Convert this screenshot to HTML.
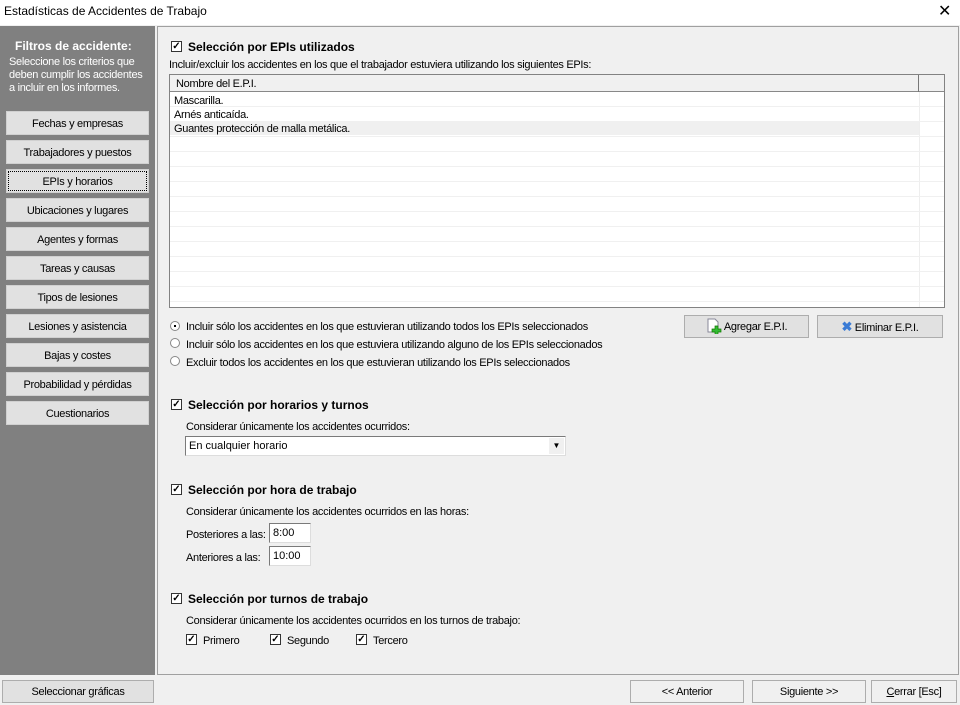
<!DOCTYPE html>
<html><head><meta charset="utf-8"><style>
*{box-sizing:border-box;margin:0;padding:0}
body{width:960px;height:705px;background:#f0f0f0;font-family:"Liberation Sans",sans-serif;font-size:11px;color:#000;position:relative;overflow:hidden}
.a{position:absolute;white-space:nowrap}
.t{letter-spacing:-0.3px}
.sb{position:absolute;left:6px;width:143px;height:24px;background:#e1e1e1;border:1px solid #d0d0d0;text-align:center;line-height:24px;font-size:11px;letter-spacing:-0.3px}
.cb{position:absolute;width:11px;height:11px;border:1px solid #333;background:#fff;font-size:10px;line-height:9px;text-align:center;font-weight:bold}
.h{font-weight:bold;font-size:12px}
.rd{position:absolute;width:10px;height:10px;border:1px solid #888;border-radius:50%;background:#fff}
.btn{position:absolute;height:23px;background:#e1e1e1;border:1px solid #adadad;text-align:center;line-height:22px;letter-spacing:-0.3px}
.inp{position:absolute;height:20px;background:#fff;border:1px solid #7a7a7a;border-right-color:#ddd;border-bottom-color:#ddd;padding-left:3px;line-height:19px}
</style></head><body>
<div class="a" style="left:0;top:0;width:960px;height:25px;background:#fff"></div>
<div class="a" style="left:4px;top:4px;font-size:12px">Estadísticas de Accidentes de Trabajo</div>
<div class="a" style="left:938px;top:1px;font-size:16px">✕</div>

<div class="a" style="left:0;top:26px;width:155px;height:649px;background:#808080"></div>
<div class="a" style="left:15px;top:39px;color:#fff;font-weight:bold;font-size:12px">Filtros de accidente:</div>
<div class="a t" style="left:9px;top:56px;color:#fff;line-height:13px">Seleccione los criterios que<br>deben cumplir los accidentes<br>a incluir en los informes.</div>
<div class="sb" style="top:111px">Fechas y empresas</div>
<div class="sb" style="top:140px">Trabajadores y puestos</div>
<div class="sb" style="top:169px;outline:1px dotted #000;outline-offset:-3px">EPIs y horarios</div>
<div class="sb" style="top:198px">Ubicaciones y lugares</div>
<div class="sb" style="top:227px">Agentes y formas</div>
<div class="sb" style="top:256px">Tareas y causas</div>
<div class="sb" style="top:285px">Tipos de lesiones</div>
<div class="sb" style="top:314px">Lesiones y asistencia</div>
<div class="sb" style="top:343px">Bajas y costes</div>
<div class="sb" style="top:372px">Probabilidad y pérdidas</div>
<div class="sb" style="top:401px">Cuestionarios</div>

<div class="a" style="left:157px;top:26px;width:802px;height:649px;border:1px solid #a0a0a0;background:#f0f0f0"></div>

<div class="cb" style="left:171px;top:41px">✓</div>
<div class="a h" style="left:188px;top:40px">Selección por EPIs utilizados</div>
<div class="a t" style="left:169px;top:59px">Incluir/excluir los accidentes en los que el trabajador estuviera utilizando los siguientes EPIs:</div>
<div class="a" style="left:169px;top:74px;width:776px;height:234px;background:#fff;border:1px solid #828282"></div>
<div class="a" style="left:170px;top:75px;width:774px;height:17px;background:#f0f0f0;border-bottom:1px solid #888"></div>
<div class="a" style="left:918px;top:75px;width:1px;height:17px;background:#777"></div>
<div class="a t" style="left:176px;top:78px">Nombre del E.P.I.</div>
<div class="a" style="left:170px;top:121px;width:749px;height:14px;background:#f0f0f0"></div>
<div class="a" style="left:919px;top:92px;width:1px;height:215px;background:#eee"></div>
<div class="a" style="left:170px;top:92px;width:774px;height:215px;background:repeating-linear-gradient(to bottom,transparent 0,transparent 14px,#f0f0f0 14px,#f0f0f0 15px)"></div>
<div class="a t" style="left:174px;top:95px">Mascarilla.</div>
<div class="a t" style="left:174px;top:109px">Arnés anticaída.</div>
<div class="a t" style="left:174px;top:123px">Guantes protección de malla metálica.</div>

<div class="rd" style="left:170px;top:321px"><div style="position:absolute;left:3px;top:3px;width:2px;height:2px;background:#000"></div></div>
<div class="a t" style="left:186px;top:321px">Incluir sólo los accidentes en los que estuvieran utilizando todos los EPIs seleccionados</div>
<div class="rd" style="left:170px;top:338px"></div>
<div class="a t" style="left:186px;top:339px">Incluir sólo los accidentes en los que estuviera utilizando alguno de los EPIs seleccionados</div>
<div class="rd" style="left:170px;top:356px"></div>
<div class="a t" style="left:186px;top:357px">Excluir todos los accidentes en los que estuvieran utilizando los EPIs seleccionados</div>

<div class="btn" style="left:684px;top:315px;width:125px"><svg width="16" height="16" style="vertical-align:-4px" viewBox="0 0 16 16"><path d="M2 1h7l3 3v10H2z" fill="#fff" stroke="#889"/><path d="M9 8h3v3h3v3h-3v3h-3v-3H6v-3h3z" fill="#3b3" stroke="#170" stroke-width=".7"/></svg> Agregar E.P.I.</div>
<div class="btn" style="left:817px;top:315px;width:126px"><span style="color:#3a7bd5;font-weight:bold;font-size:13px">✖</span> Eliminar E.P.I.</div>

<div class="cb" style="left:171px;top:399px">✓</div>
<div class="a h" style="left:188px;top:398px">Selección por horarios y turnos</div>
<div class="a t" style="left:186px;top:421px">Considerar únicamente los accidentes ocurridos:</div>
<div class="inp" style="left:185px;top:436px;width:381px">En cualquier horario<div style="position:absolute;right:1px;top:1px;width:15px;height:16px;background:#f0f0f0;font-size:8px;line-height:16px;text-align:center">▼</div></div>

<div class="cb" style="left:171px;top:484px">✓</div>
<div class="a h" style="left:188px;top:483px">Selección por hora de trabajo</div>
<div class="a t" style="left:186px;top:506px">Considerar únicamente los accidentes ocurridos en las horas:</div>
<div class="a t" style="left:186px;top:529px">Posteriores a las:</div>
<div class="inp" style="left:269px;top:523px;width:42px">8:00</div>
<div class="a t" style="left:186px;top:552px">Anteriores a las:</div>
<div class="inp" style="left:269px;top:546px;width:42px">10:00</div>

<div class="cb" style="left:171px;top:593px">✓</div>
<div class="a h" style="left:188px;top:592px">Selección por turnos de trabajo</div>
<div class="a t" style="left:186px;top:615px">Considerar únicamente los accidentes ocurridos en los turnos de trabajo:</div>
<div class="cb" style="left:186px;top:634px">✓</div><div class="a t" style="left:203px;top:635px">Primero</div>
<div class="cb" style="left:270px;top:634px">✓</div><div class="a t" style="left:287px;top:635px">Segundo</div>
<div class="cb" style="left:356px;top:634px">✓</div><div class="a t" style="left:373px;top:635px">Tercero</div>

<div class="btn" style="left:2px;top:680px;width:152px">Seleccionar gráficas</div>
<div class="btn" style="left:630px;top:680px;width:114px;background:#f0f0f0">&lt;&lt; Anterior</div>
<div class="btn" style="left:752px;top:680px;width:114px;background:#f0f0f0">Siguiente &gt;&gt;</div>
<div class="btn" style="left:871px;top:680px;width:86px;background:#f0f0f0"><u>C</u>errar [Esc]</div>
</body></html>
